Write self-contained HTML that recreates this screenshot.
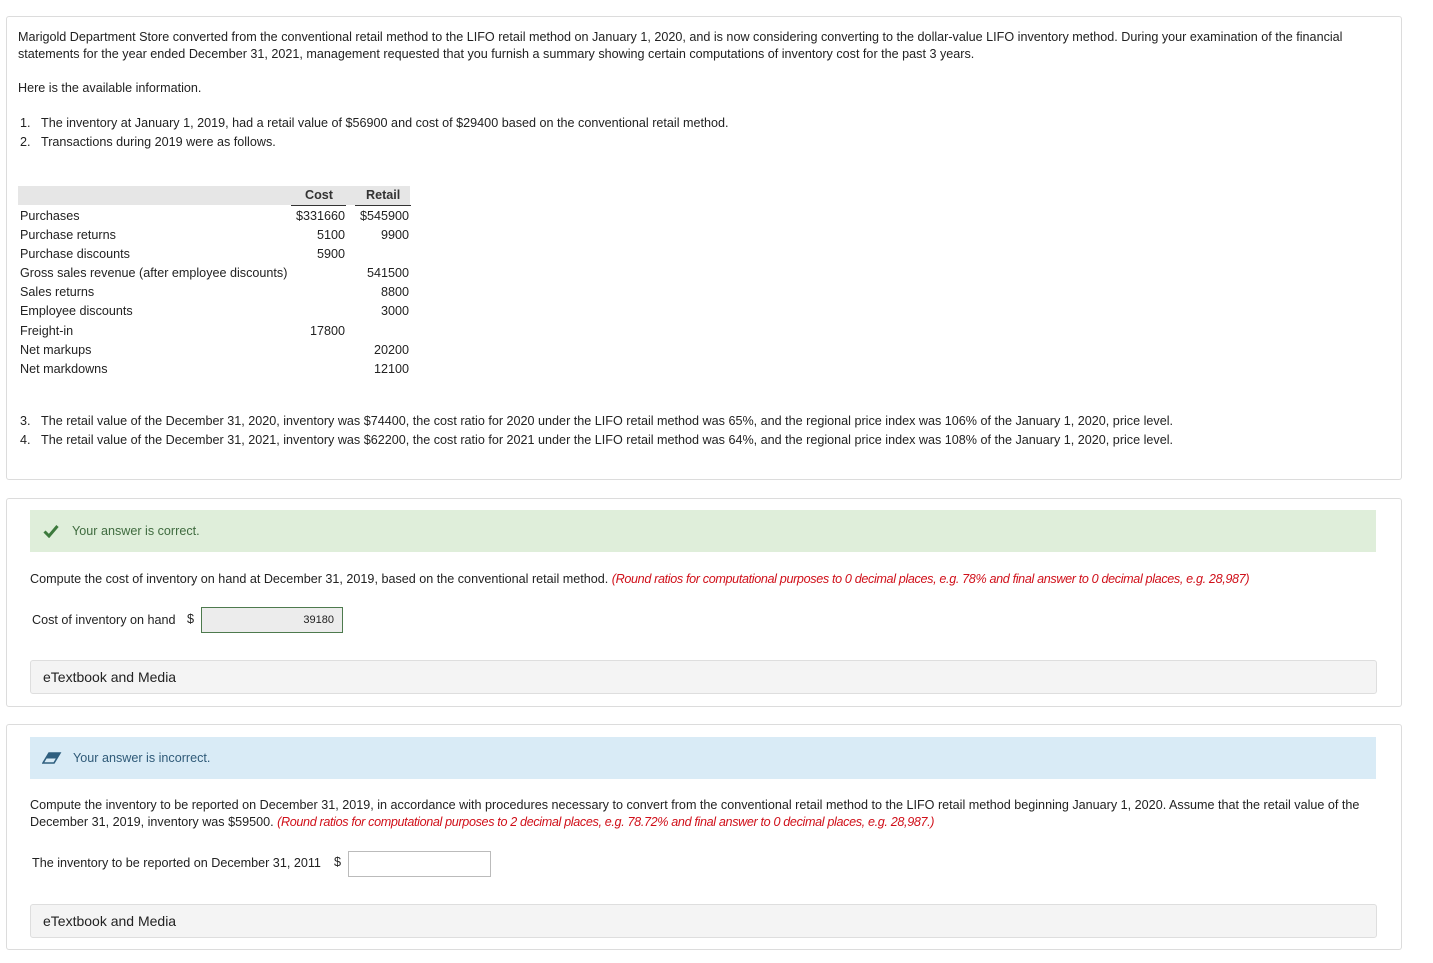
<!DOCTYPE html>
<html><head><meta charset="utf-8"><style>
body{margin:0;width:1433px;height:963px;background:#fff;font-family:"Liberation Sans",sans-serif;font-size:12.6px;color:#222;position:relative;overflow:hidden}
.a{position:absolute;white-space:nowrap}
.card{position:absolute;left:6px;width:1394px;border:1px solid #dcdcdc;border-radius:3px;background:#fff}
.r{text-align:right}
.red{color:#d0101a;font-style:italic;letter-spacing:-0.35px}
.etb{position:absolute;left:30px;width:1345px;height:32px;background:#f4f4f4;border:1px solid #dedede;border-radius:3px;font-size:14px;line-height:32px;text-indent:12px;color:#222}
</style></head><body>
<div class="card" style="top:16px;height:462px"></div>
<div class="a" style="left:18px;top:30px">Marigold Department Store converted from the conventional retail method to the LIFO retail method on January 1, 2020, and is now considering converting to the dollar-value LIFO inventory method. During your examination of the financial</div>
<div class="a" style="left:18px;top:47px">statements for the year ended December 31, 2021, management requested that you furnish a summary showing certain computations of inventory cost for the past 3 years.</div>
<div class="a" style="left:18px;top:81px">Here is the available information.</div>
<div class="a" style="left:20px;top:116px">1.&nbsp;&nbsp;&nbsp;The inventory at January 1, 2019, had a retail value of $56900 and cost of $29400 based on the conventional retail method.</div>
<div class="a" style="left:20px;top:135px">2.&nbsp;&nbsp;&nbsp;Transactions during 2019 were as follows.</div>
<div class="a" style="left:18px;top:186px;width:392px;height:19px;background:#e6e6e6"></div>
<div class="a" style="left:291px;top:205px;width:55px;height:1px;background:#333"></div>
<div class="a" style="left:355px;top:205px;width:56px;height:1px;background:#333"></div>
<div class="a" style="left:305px;top:188px;font-weight:bold;color:#333">Cost</div>
<div class="a" style="left:366px;top:188px;font-weight:bold;color:#333">Retail</div>
<div class="a" style="left:20px;top:207px;line-height:19.1px">Purchases<br>Purchase returns<br>Purchase discounts<br>Gross sales revenue (after employee discounts)<br>Sales returns<br>Employee discounts<br>Freight-in<br>Net markups<br>Net markdowns</div>
<div class="a r" style="left:270px;width:75px;top:207px;line-height:19.1px">$331660<br>5100<br>5900<br>&nbsp;<br>&nbsp;<br>&nbsp;<br>17800</div>
<div class="a r" style="left:340px;width:69px;top:207px;line-height:19.1px">$545900<br>9900<br>&nbsp;<br>541500<br>8800<br>3000<br>&nbsp;<br>20200<br>12100</div>
<div class="a" style="left:20px;top:414px">3.&nbsp;&nbsp;&nbsp;The retail value of the December 31, 2020, inventory was $74400, the cost ratio for 2020 under the LIFO retail method was 65%, and the regional price index was 106% of the January 1, 2020, price level.</div>
<div class="a" style="left:20px;top:433px">4.&nbsp;&nbsp;&nbsp;The retail value of the December 31, 2021, inventory was $62200, the cost ratio for 2021 under the LIFO retail method was 64%, and the regional price index was 108% of the January 1, 2020, price level.</div>

<div class="card" style="top:498px;height:207px"></div>
<div class="a" style="left:30px;top:510px;width:1346px;height:42px;background:#dfeeda"></div>
<svg class="a" style="left:43px;top:524px" width="16" height="14" viewBox="0 0 16 14"><path d="M1.5 7.5 L6 12 L14.5 2" fill="none" stroke="#3d7a3d" stroke-width="3"/></svg>
<div class="a" style="left:72px;top:524px;color:#3f6b3f">Your answer is correct.</div>
<div class="a" style="left:30px;top:572px">Compute the cost of inventory on hand at December 31, 2019, based on the conventional retail method. <span class="red">(Round ratios for computational purposes to 0 decimal places, e.g. 78% and final answer to 0 decimal places, e.g. 28,987)</span></div>
<div class="a" style="left:32px;top:613px">Cost of inventory on hand</div>
<div class="a" style="left:187px;top:612px">$</div>
<div class="a r" style="left:201px;top:607px;width:132px;height:24px;line-height:24px;background:#ececec;border:1px solid #4d7a4d;padding-right:8px;font-size:11px">39180</div>
<div class="etb" style="top:660px">eTextbook and Media</div>

<div class="card" style="top:724px;height:224px"></div>
<div class="a" style="left:30px;top:737px;width:1346px;height:42px;background:#d9ebf6"></div>
<svg class="a" style="left:42px;top:751px" width="20" height="14" viewBox="0 0 20 14"><path d="M7 2 L18 2 L12 12 L1 12 Z" fill="none" stroke="#2f5f7f" stroke-width="1.6"/><path d="M7 2 L18 2 L14.5 7.5 L3.5 7.5 Z" fill="#2f5f7f"/></svg>
<div class="a" style="left:73px;top:751px;color:#2f5a78">Your answer is incorrect.</div>
<div class="a" style="left:30px;top:798px">Compute the inventory to be reported on December 31, 2019, in accordance with procedures necessary to convert from the conventional retail method to the LIFO retail method beginning January 1, 2020. Assume that the retail value of the</div>
<div class="a" style="left:30px;top:815px">December 31, 2019, inventory was $59500. <span class="red">(Round ratios for computational purposes to 2 decimal places, e.g. 78.72% and final answer to 0 decimal places, e.g. 28,987.)</span></div>
<div class="a" style="left:32px;top:856px">The inventory to be reported on December 31, 2011</div>
<div class="a" style="left:334px;top:855px">$</div>
<div class="a" style="left:348px;top:851px;width:141px;height:24px;border:1px solid #bbb;background:#fff"></div>
<div class="etb" style="top:904px">eTextbook and Media</div>
</body></html>
